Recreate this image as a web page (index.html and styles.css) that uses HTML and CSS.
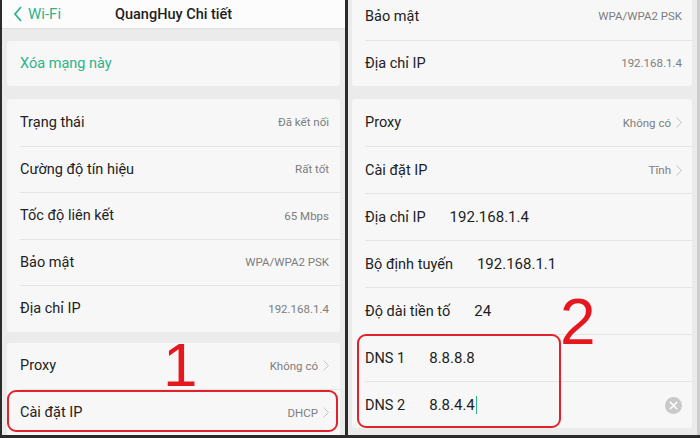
FILE: index.html
```html
<!DOCTYPE html>
<html lang="vi">
<head>
<meta charset="utf-8">
<title>QuangHuy Chi tiết</title>
<link rel="stylesheet" href="styles.css">
</head>
<body>
<div class="frame">
  <section class="panel left">
    <header class="bar">
      <div class="back">
        <svg class="back-ico" width="10" height="16" viewBox="0 0 10 16"><polyline points="8,1 2,8 8,15" fill="none" stroke="#2db38a" stroke-width="1.8"/></svg>
        <span>Wi-Fi</span>
      </div>
      <div class="title">QuangHuy Chi tiết</div>
    </header>
    <div class="content">
      <div class="card first">
        <div class="row"><span class="link">Xóa mạng này</span></div>
      </div>
      <div class="card">
        <div class="row"><span class="label">Trạng thái</span><span class="value">Đã kết nối</span></div>
        <div class="row"><span class="label">Cường độ tín hiệu</span><span class="value">Rất tốt</span></div>
        <div class="row"><span class="label">Tốc độ liên kết</span><span class="value">65 Mbps</span></div>
        <div class="row"><span class="label">Bảo mật</span><span class="value">WPA/WPA2 PSK</span></div>
        <div class="row"><span class="label">Địa chỉ IP</span><span class="value">192.168.1.4</span></div>
      </div>
      <div class="card">
        <div class="row"><span class="label">Proxy</span><span class="value">Không có <svg class="chev" width="6" height="11" viewBox="0 0 6 11"><polyline points="0.5,0.5 5.5,5.5 0.5,10.5" fill="none" stroke="#c4c4c4" stroke-width="1"/></svg></span></div>
        <div class="row"><span class="label">Cài đặt IP</span><span class="value">DHCP <svg class="chev" width="6" height="11" viewBox="0 0 6 11"><polyline points="0.5,0.5 5.5,5.5 0.5,10.5" fill="none" stroke="#c4c4c4" stroke-width="1"/></svg></span></div>
      </div>
    </div>
    <div class="mark box1"></div>
    <div class="num num1">1</div>
  </section>

  <section class="panel right">
    <div class="content">
      <div class="card scrolled">
        <div class="row"><span class="label">Bảo mật</span><span class="value">WPA/WPA2 PSK</span></div>
        <div class="row"><span class="label">Địa chỉ IP</span><span class="value">192.168.1.4</span></div>
      </div>
      <div class="card">
        <div class="row"><span class="label">Proxy</span><span class="value">Không có <svg class="chev" width="6" height="11" viewBox="0 0 6 11"><polyline points="0.5,0.5 5.5,5.5 0.5,10.5" fill="none" stroke="#c4c4c4" stroke-width="1"/></svg></span></div>
        <div class="row"><span class="label">Cài đặt IP</span><span class="value">Tĩnh <svg class="chev" width="6" height="11" viewBox="0 0 6 11"><polyline points="0.5,0.5 5.5,5.5 0.5,10.5" fill="none" stroke="#c4c4c4" stroke-width="1"/></svg></span></div>
        <div class="row input"><span class="label">Địa chỉ IP</span><span class="field">192.168.1.4</span></div>
        <div class="row input"><span class="label">Bộ định tuyến</span><span class="field">192.168.1.1</span></div>
        <div class="row input"><span class="label">Độ dài tiền tố</span><span class="field">24</span></div>
        <div class="row input"><span class="label">DNS 1</span><span class="field">8.8.8.8</span></div>
        <div class="row input"><span class="label">DNS 2</span><span class="field">8.8.4.4<span class="caret"></span></span>
          <svg class="clear" width="17" height="17" viewBox="0 0 17 17"><circle cx="8.5" cy="8.5" r="8.5" fill="#c9c9c9"/><path d="M5.3 5.3 L11.7 11.7 M11.7 5.3 L5.3 11.7" stroke="#fff" stroke-width="1.6" stroke-linecap="round"/></svg>
        </div>
      </div>
    </div>
    <div class="mark box2"></div>
    <div class="num num2">2</div>
  </section>
</div>
</body>
</html>
```
FILE: styles.css
```css
* { box-sizing: border-box; }
html, body { margin: 0; padding: 0; }
body {
  width: 700px;
  height: 438px;
  overflow: hidden;
  background: #fff;
  font-family: Roboto, "Noto Sans", "Liberation Sans", sans-serif;
}
.frame {
  display: flex;
  width: 700px;
  height: 438px;
  border-bottom: 3px solid #2b2b2b;
  overflow: hidden;
}
.panel {
  position: relative;
  background: #ebebeb;
  overflow: hidden;
}
.left {
  width: 345px;
  border-left: 2px solid #2b2b2b;
}
.right {
  width: 355px;
  border-left: 3px solid #2b2b2b;
  border-right: 3px solid #cdcdcd;
}
.bar {
  height: 29px;
  background: #fcfcfc;
  border-bottom: 1px solid #dedede;
  display: flex;
  align-items: center;
}
.back {
  display: flex;
  align-items: center;
  gap: 5px;
  padding-left: 11px;
  color: #2db38a;
  font-size: 15px;
  width: 113px;
}
.back-ico { display: block; }
.title {
  font-size: 14.5px;
  color: #1e1e1e;
  font-weight: 500;
}
.left .content { padding: 12px 5px 0 5px; }
.right .content { padding: 0 5px 0 4px; }
.card {
  background: #f7f7f7;
  border-radius: 3px;
  padding-left: 13px;
  margin-bottom: 13px;
}
.left .card { margin-bottom: 11px; }
.left .card.first { margin-bottom: 13px; }
.card.first .row { height: 45px; }
.row {
  height: 46.5px;
  display: flex;
  align-items: center;
  justify-content: space-between;
  padding-right: 11px;
}
.right .row { padding-right: 10px; }
.right .card:not(.scrolled) .row { height: 47px; }
.row + .row { border-top: 1px solid #e4e4e4; }
.card.scrolled { margin-top: -7px; }
.label {
  font-size: 14.5px;
  color: #222;
}
.link {
  font-size: 14.5px;
  color: #2db38a;
}
.value {
  font-size: 11.5px;
  color: #7d7d7d;
  display: flex;
  align-items: center;
  gap: 5px;
}
.chev { display: block; }
.row.input { justify-content: flex-start; gap: 24px; }
.field {
  font-size: 15px;
  color: #1e1e1e;
  display: flex;
  align-items: center;
}
.caret {
  display: inline-block;
  width: 1.5px;
  height: 18px;
  background: #2db38a;
  margin-left: 1px;
}
.clear { margin-left: auto; display: block; }
.mark {
  position: absolute;
  border: 2px solid #e3212a;
  border-radius: 9px;
}
.box1 { left: 5px; top: 390px; width: 331px; height: 42px; }
.box2 { left: 9px; top: 334px; width: 204px; height: 94px; }
.num {
  position: absolute;
  font-family: "Liberation Sans", Arial, sans-serif;
  color: #e4181e;
  line-height: 1;
}
.num1 { font-size: 62px; left: 161px; top: 334px; }
.num2 { font-size: 64px; left: 212px; top: 290px; }
```
